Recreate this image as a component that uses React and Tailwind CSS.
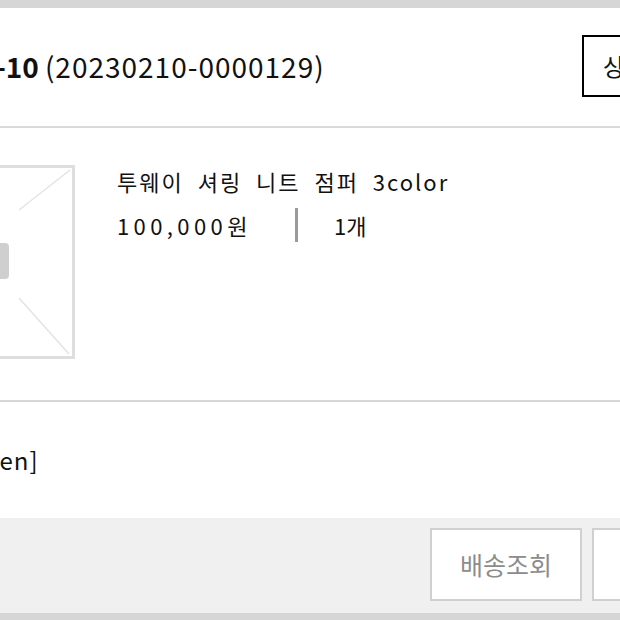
import React from 'react';

const font = "font-['Noto_Sans_CJK_KR','Noto_Sans',sans-serif]";

// Placeholder thumbnail (envelope-like empty image)
const Thumb = () => (
  <div className="w-[195px] h-[194px] border-[3px] border-[#dedede] bg-white shrink-0">
    <svg width="189" height="188" viewBox="0 0 189 188">
      <line x1="187" y1="2" x2="136" y2="42" stroke="#e4e4e4" strokeWidth="1.5" />
      <line x1="136" y1="130" x2="186" y2="186" stroke="#e4e4e4" strokeWidth="1.5" />
      <rect x="100" y="75" width="26" height="36" rx="4" fill="#cfcfcf" />
    </svg>
  </div>
);

export default function App() {
  return (
    <div className={`w-[620px] h-[620px] overflow-hidden bg-white text-[#111] ${font}`}>
      <div className="w-[1000px] ml-[-160px] flex flex-col">
        {/* top strip */}
        <div className="h-2 bg-[#d6d6d6]" />

        {/* order header */}
        <div className="h-[120px] border-b-2 border-[#dadada] flex items-center pl-[46px] pb-[2px]">
          <div className="w-[696px] flex items-center text-[28px] leading-none">
            <span className="font-bold">2023-02-10</span>
            <span className="ml-[6px] tracking-[1px]">(20230210-0000129)</span>
          </div>
          <button className="h-[62px] border-2 border-black px-[19px] text-[24px] leading-none whitespace-nowrap">
            상세보기
          </button>
        </div>

        {/* product */}
        <div className="h-[274px] border-b-2 border-[#d6d6d6] flex pl-[40px] pt-[37px]">
          <Thumb />
          <div className="ml-[42px] flex flex-col">
            <p className="text-[22px] leading-none mt-[5px] tracking-[2px] [word-spacing:7px]">
              투웨이 셔링 니트 점퍼 3color
            </p>
            <div className="flex items-center mt-[16px] h-[34px]">
              <span className="text-[22px] leading-none tracking-[4.4px] w-[178px]">100,000원</span>
              <span className="w-[3px] h-[34px] bg-[#9a9a9a]" />
              <span className="ml-[36px] text-[22px] leading-none">1개</span>
            </div>
          </div>
        </div>

        {/* option */}
        <div className="h-[116px] flex items-center pl-[40px]">
          <span className="text-[24px] leading-none tracking-[1px] ml-[5px]">[옵션 : green]</span>
        </div>

        {/* footer actions */}
        <div className="h-[95px] bg-[#f0f0f0] flex items-center pl-[590px] gap-[10px] pb-[2px]">
          <button className="w-[152px] h-[73px] border-2 border-[#d0d0d0] bg-white text-[25px] text-[#8c8c8c] leading-none">
            배송조회
          </button>
          <button className="w-[152px] h-[73px] border-2 border-[#d0d0d0] bg-white text-[25px] text-[#8c8c8c] leading-none">
            구매확정
          </button>
        </div>
        <div className="h-3 bg-[#d6d6d6]" />
      </div>
    </div>
  );
}
